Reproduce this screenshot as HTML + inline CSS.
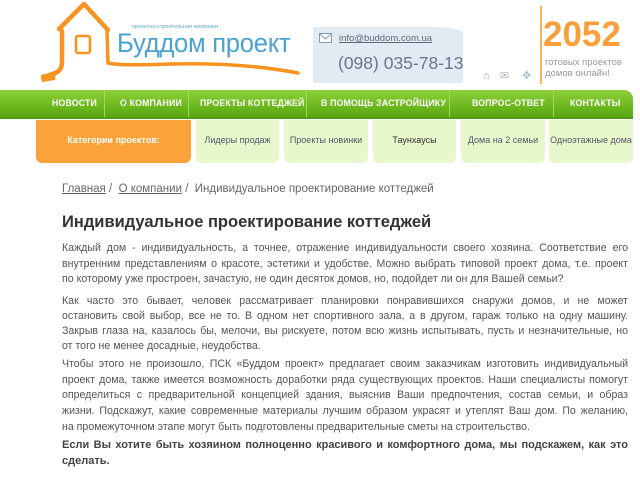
<!DOCTYPE html>
<html><head><meta charset="utf-8"><style>
*{margin:0;padding:0;box-sizing:border-box}
body{width:640px;height:480px;overflow:hidden;background:#fff;font-family:"Liberation Sans",sans-serif;position:relative}
.a{position:absolute}
.nav{left:0;top:90px;width:633px;height:29px;background:linear-gradient(#8fd03a,#6cb81f 60%,#5aa613);border-top-right-radius:9px;border-bottom:2px solid #4e9a10}
.nav span{position:absolute;top:8px;color:#fff;font-weight:bold;font-size:9.5px;letter-spacing:.2px;white-space:nowrap;transform:scaleX(.92);transform-origin:left}
.sep{position:absolute;top:0;width:1px;height:27px;background:#9fda5a}
.tab{top:120px;height:43px;background:#e6f8cc;border-radius:0 0 6px 6px;font-size:9px;color:#556;text-align:center;line-height:40px;white-space:nowrap;overflow:hidden}
.txt{left:62px;width:566px;font-size:10.6px;color:#555;line-height:15.7px}
.txt div{text-align:justify;text-align-last:justify;white-space:nowrap}
.txt div.l{text-align-last:left}
</style></head><body>
<svg class="a" style="left:36px;top:0" width="300" height="90" viewBox="36 0 300 90">
<g fill="none" stroke="#f7931e" stroke-width="4.5" stroke-linecap="round" stroke-linejoin="round">
<path d="M59 29 L84 4 L108 30"/>
<path d="M62 31 L62 62 Q62 72 52 74 L43 78"/>
<path d="M107 31 L108 63 Q120 66 170 64 Q240 62 298 73" stroke-width="3.5"/>
<rect x="76" y="36" width="14" height="17" rx="2" stroke-width="2.5"/>
</g>
<path d="M41 75 L56 71 L55 80 L42 82Z" fill="#f7931e"/>
</svg>
<div class="a" style="left:132px;top:24px;font-size:5.5px;color:#5aa9d0">проектно-строительная компания</div>
<div class="a" style="left:117px;top:28px;font-size:27px;color:#4aa3d0;letter-spacing:-.3px;transform:scaleX(.95);transform-origin:left">Буддом проект</div>
<div class="a" style="left:313px;top:27px;width:150px;height:56px;background:#e2ebf3;border-top-right-radius:30px 6px"></div>
<svg class="a" style="left:319px;top:33px" width="13" height="10"><rect x=".5" y=".5" width="12" height="9" fill="#fff" stroke="#8899aa"/><path d="M1 1 L6.5 6 L12 1" fill="none" stroke="#8899aa"/></svg>
<div class="a" style="left:339px;top:33px;font-size:9.5px;color:#667;text-decoration:underline">info@buddom.com.ua</div>
<div class="a" style="left:338px;top:53px;font-size:17.5px;color:#6a7786">(098) 035-78-13</div>
<div class="a" style="left:483px;top:70px;font-size:11px;color:#99aab8">⌂</div>
<div class="a" style="left:500px;top:69px;font-size:11px;color:#aabbc8">✉</div>
<div class="a" style="left:522px;top:69px;font-size:11px;color:#aabbc8">✥</div>
<div class="a" style="left:540px;top:6px;width:2px;height:78px;background:#fbb15a"></div>
<div class="a" style="left:543px;top:15px;font-size:35px;font-weight:bold;color:#f9a03c">2052</div>
<div class="a" style="left:545px;top:57px;font-size:9.5px;color:#999;line-height:11px">готовых проектов<br>домов онлайн!</div>
<div class="a nav">
<span style="left:52px">НОВОСТИ</span><div class="sep" style="left:104px"></div>
<span style="left:120px">О КОМПАНИИ</span><div class="sep" style="left:188px"></div>
<span style="left:200px">ПРОЕКТЫ КОТТЕДЖЕЙ</span><div class="sep" style="left:306px"></div>
<span style="left:321px">В ПОМОЩЬ ЗАСТРОЙЩИКУ</span><div class="sep" style="left:449px"></div>
<span style="left:472px">ВОПРОС-ОТВЕТ</span><div class="sep" style="left:553px"></div>
<span style="left:570px">КОНТАКТЫ</span>
</div>
<div class="a tab" style="left:36px;width:155px;background:#fba23a;color:#fff;font-weight:bold">Категории проектов:</div>
<div class="a tab" style="left:196px;width:83px">Лидеры продаж</div>
<div class="a tab" style="left:284px;width:84px">Проекты новинки</div>
<div class="a tab" style="left:373px;width:83px;color:#333">Таунхаусы</div>
<div class="a tab" style="left:461px;width:84px">Дома на 2 семьи</div>
<div class="a tab" style="left:549px;width:84px">Одноэтажные дома</div>
<div class="a" style="left:62px;top:183px;font-size:11.5px;color:#666"><u>Главная</u> / &nbsp;<u>О компании</u> / &nbsp;Индивидуальное проектирование коттеджей</div>
<div class="a" style="left:62px;top:213px;font-size:16.5px;font-weight:bold;color:#333">Индивидуальное проектирование коттеджей</div>
<div class="a txt" style="top:241px">
<div>Каждый дом - индивидуальность, а точнее, отражение индивидуальности своего хозяина. Соответствие его</div>
<div>внутренним представлениям о красоте, эстетики и удобстве. Можно выбрать типовой проект дома, т.е. проект</div>
<div class="l">по которому уже простроен, зачастую, не один десяток домов, но, подойдет ли он для Вашей семьи?</div>
</div>
<div class="a txt" style="top:294px;line-height:15px">
<div>Как часто это бывает, человек рассматривает планировки понравившихся снаружи домов, и не может</div>
<div>остановить свой выбор, все не то. В одном нет спортивного зала, а в другом, гараж только на одну машину.</div>
<div>Закрыв глаза на, казалось бы, мелочи, вы рискуете, потом всю жизнь испытывать, пусть и незначительные, но</div>
<div class="l">от того не менее досадные, неудобства.</div>
</div>
<div class="a txt" style="top:357px">
<div>Чтобы этого не произошло, ПСК «Буддом проект» предлагает своим заказчикам изготовить индивидуальный</div>
<div>проект дома, также имеется возможность доработки ряда существующих проектов. Наши специалисты помогут</div>
<div>определиться с предварительной концепцией здания, выяснив Ваши предпочтения, состав семьи, и образ</div>
<div>жизни. Подскажут, какие современные материалы лучшим образом украсят и утеплят Ваш дом. По желанию,</div>
<div class="l">на промежуточном этапе могут быть подготовлены предварительные сметы на строительство.</div>
</div>
<div class="a txt" style="top:438px;font-weight:bold;font-size:11px;color:#444">
<div>Если Вы хотите быть хозяином полноценно красивого и комфортного дома, мы подскажем, как это</div>
<div class="l">сделать.</div>
</div>
</body></html>
